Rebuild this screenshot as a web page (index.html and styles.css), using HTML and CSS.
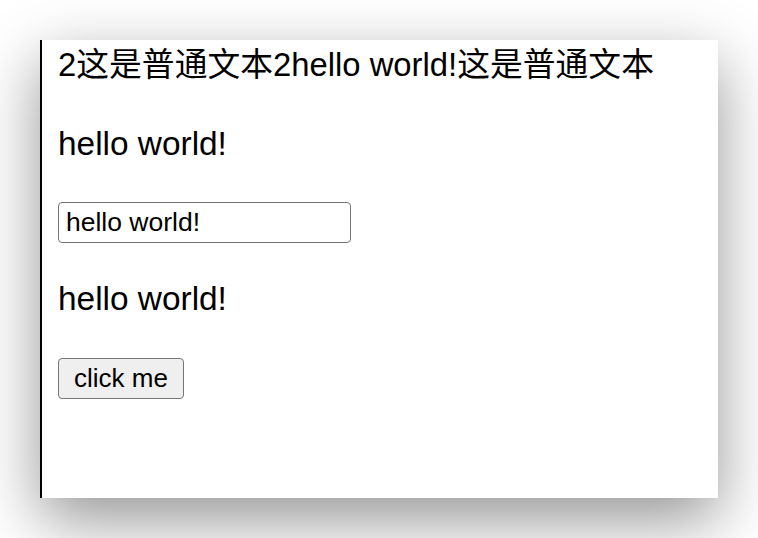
FILE: index.html
```html
<!DOCTYPE html>
<html lang="zh">
<head>
<meta charset="utf-8">
<title>demo</title>
<link rel="stylesheet" href="styles.css">
</head>
<body>
<div class="window">
  <div class="line1">2这是普通文本2hello world!这是普通文本</div>
  <p class="text text-a">hello world!</p>
  <input class="field" type="text" value="hello world!">
  <p class="text text-b">hello world!</p>
  <button class="btn" type="button">click me</button>
</div>
</body>
</html>
```
FILE: styles.css
```css
html, body {
  margin: 0;
  padding: 0;
  background: #ffffff;
}
body {
  padding: 40px;
  font-family: "Liberation Sans", "Noto Sans CJK SC", sans-serif;
  color: #000;
}
.window {
  box-sizing: border-box;
  width: 678px;
  height: 458px;
  background: #fff;
  border-left: 2px solid #000;
  padding: 6px 16px 0;
  box-shadow: 0 22px 60px rgba(0, 0, 0, 0.42);
  display: flex;
  flex-direction: column;
  align-items: flex-start;
}
.line1 {
  font-size: 32.8px;
  line-height: 38px;
  white-space: nowrap;
}
.text {
  font-size: 33.4px;
  line-height: 37px;
  margin: 0;
}
.text-a { margin-top: 41px; }
.text-b { margin-top: 37px; }
.field {
  box-sizing: border-box;
  margin: 40px 0 0;
  width: 293px;
  height: 41px;
  padding: 0 7px;
  border: 1px solid #767676;
  border-radius: 4px;
  font-family: "Liberation Sans", sans-serif;
  font-size: 26.5px;
  color: #000;
  background: #fff;
}
.btn {
  box-sizing: border-box;
  margin: 41px 0 0;
  width: 126px;
  height: 41px;
  padding: 0;
  border: 1px solid #767676;
  border-radius: 4px;
  background: #efefef;
  font-family: "Liberation Sans", sans-serif;
  font-size: 26px;
  color: #000;
}
```
